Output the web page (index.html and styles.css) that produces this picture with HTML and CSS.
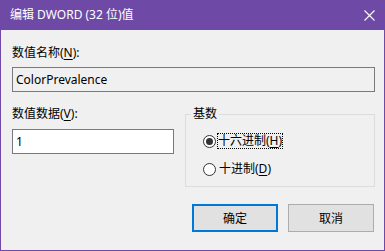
FILE: index.html
```html
<!DOCTYPE html>
<html lang="zh-CN">
<head>
<meta charset="utf-8">
<link rel="stylesheet" href="styles.css">
</head>
<body>
<div class="window">
  <div class="titlebar">
    <span class="title">编辑 DWORD (32 位)值</span>
    <span class="close"><svg width="11" height="11" viewBox="0 0 11 11"><path d="M0.5 0.5 L10.5 10.5 M10.5 0.5 L0.5 10.5" stroke="#fff" stroke-width="1.1" fill="none"/></svg></span>
  </div>
  <div class="content">
    <div class="label">数值名称(<u>N</u>):</div>
    <div class="field readonly">ColorPrevalence</div>
    <div class="row">
      <div class="col">
        <div class="label">数值数据(<u>V</u>):</div>
        <div class="field data">1</div>
      </div>
      <fieldset class="group">
        <legend>基数</legend>
        <div class="radio"><span class="dot checked"></span><span class="rtext focus">十六进制(<u>H</u>)</span></div>
        <div class="radio second"><span class="dot"></span><span class="rtext">十进制(<u>D</u>)</span></div>
      </fieldset>
    </div>
    <div class="buttons">
      <div class="btn default">确定</div>
      <div class="btn">取消</div>
    </div>
  </div>
</div>
</body>
</html>
```

FILE: styles.css
```css
* { box-sizing: border-box; }
html, body { margin: 0; padding: 0; background: #f0f0f0; }
body {
  font-family: "Noto Sans", "Noto Sans CJK SC", sans-serif;
  font-size: 12px;
  color: #000;
}
.window {
  width: 385px;
  height: 251px;
  border: 1px solid #6e4aa6;
  border-top: 0;
  background: #f0f0f0;
  display: flex;
  flex-direction: column;
}
.titlebar {
  height: 30px;
  background: #6e4aa6;
  display: flex;
  align-items: center;
  justify-content: space-between;
  padding: 0 9px 0 9px;
  color: #fff;
  line-height: 16px;
}
.title { font-family: "Noto Sans", "Noto Sans CJK SC", sans-serif; }
.close { display: flex; width: 11px; height: 11px; margin-right: 0; }
.content {
  padding: 15px 9px 0 11px;
  display: flex;
  flex-direction: column;
}
.label { line-height: 16px; height: 16px; }
u { text-decoration: underline; text-underline-offset: 2px; }
.field {
  height: 25px;
  border: 1px solid #7a7a7a;
  padding: 0 3px;
  line-height: 23px;
  margin-top: 6px;
}
.readonly { background: #f0f0f0; }
.data { background: #fff; margin-top: 7px; }
.row {
  display: flex;
  gap: 11px;
  margin-top: 14px;
}
.col { width: 162px; display: flex; flex-direction: column; }
.group {
  margin: 0;
  width: 190px;
  height: 81px;
  border: 1px solid #dcdcdc;
  padding: 11px 0 0 5px;
  min-width: 0;
}
.group legend {
  padding: 0 2px;
  line-height: 16px;
  font-size: 12px;
}
.radio {
  display: flex;
  align-items: center;
  height: 16px;
  margin-left: 12px;
}
.radio.second { margin-top: 12px; }
.dot {
  width: 13px;
  height: 13px;
  border: 1px solid #333;
  border-radius: 50%;
  background: #fff;
  display: flex;
  align-items: center;
  justify-content: center;
  flex: none;
}
.dot.checked::after {
  content: "";
  width: 7px;
  height: 7px;
  border-radius: 50%;
  background: #333;
}
.rtext {
  margin-left: 2px;
  line-height: 14px;
  border: 1px solid transparent;
  padding: 0;
}
.rtext.focus { border: 1px dotted #000; margin-left: 1px; }
.buttons {
  display: flex;
  justify-content: flex-end;
  gap: 10px;
  margin-top: 17px;
  padding-right: 1px;
}
.btn {
  width: 86px;
  height: 28px;
  background: #e1e1e1;
  border: 1px solid #adadad;
  display: flex;
  align-items: center;
  justify-content: center;
}
.btn.default { border: 2px solid #0078d7; }
```
